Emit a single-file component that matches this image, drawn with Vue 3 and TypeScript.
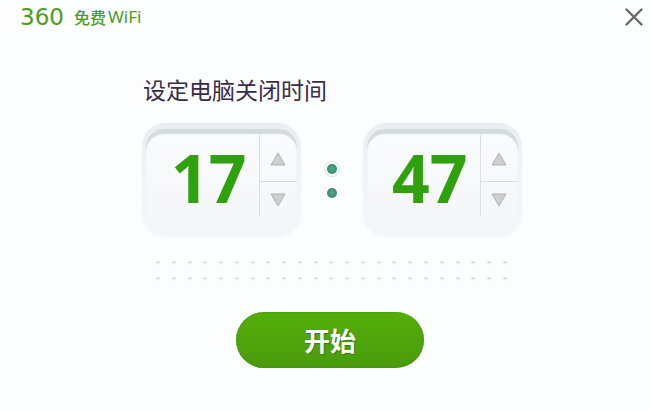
<script setup lang="ts">
import { ref } from 'vue'

interface Field {
  id: string
  label: string
  max: number
}

const fields: Field[] = [
  { id: 'hours', label: '时', max: 24 },
  { id: 'minutes', label: '分', max: 60 },
]

const values = ref<string[]>(['17', '47'])

function step(index: number, delta: number): void {
  const max = fields[index].max
  const current = Number(values.value[index]) || 0
  values.value[index] = String((current + delta + max) % max).padStart(2, '0')
}
</script>

<template>
  <div class="window">
    <header class="titlebar">
      <div class="logo">
        <span class="logo-number">360</span>
        <span class="logo-name">免费</span>
        <span class="logo-wifi">WiFi</span>
      </div>
      <button class="close" type="button" aria-label="关闭">
        <svg viewBox="0 0 18 18" width="18" height="18" aria-hidden="true">
          <path d="M1.5 1.5 16.5 16.5M16.5 1.5 1.5 16.5" />
        </svg>
      </button>
    </header>

    <main class="content">
      <section class="timer">
        <h1 class="heading">设定电脑关闭时间</h1>
        <div class="clock">
          <template v-for="(field, i) in fields" :key="field.id">
            <div v-if="i > 0" class="colon" aria-hidden="true">
              <span class="colon-dot lit"></span>
              <span class="colon-dot"></span>
            </div>
            <div class="card">
              <div class="face">
                <input
                  :id="field.id"
                  v-model="values[i]"
                  class="digits"
                  type="text"
                  inputmode="numeric"
                  maxlength="2"
                  :aria-label="field.label"
                />
                <div class="stepper">
                  <button class="step" type="button" :aria-label="field.label + '加'" @click="step(i, 1)">
                    <svg viewBox="0 0 16 14" width="16" height="14" aria-hidden="true">
                      <path d="M8 1 15 13H1Z" />
                    </svg>
                  </button>
                  <button class="step" type="button" :aria-label="field.label + '减'" @click="step(i, -1)">
                    <svg viewBox="0 0 16 14" width="16" height="14" aria-hidden="true">
                      <path d="M8 13 1 1H15Z" />
                    </svg>
                  </button>
                </div>
              </div>
            </div>
          </template>
        </div>
        <div class="grille" aria-hidden="true">
          <div v-for="row in 2" :key="row" class="grille-row">
            <span v-for="n in 23" :key="n" class="hole"></span>
          </div>
        </div>
      </section>
      <button class="start" type="button">开始</button>
    </main>
  </div>
</template>

<style>
body {
  background: #fbfdff;
}
</style>

<style scoped>
.window {
  box-sizing: border-box;
  min-height: 100vh;
  background: #fbfdff;
  font-family: "Noto Sans", "Noto Sans CJK SC", sans-serif;
}

button {
  padding: 0;
  border: 0;
  background: none;
  font-family: inherit;
  cursor: pointer;
}

.titlebar {
  display: flex;
  align-items: center;
  justify-content: space-between;
  height: 34px;
  padding: 0 7px 0 20px;
}

.logo {
  display: flex;
  align-items: center;
  line-height: 20px;
  color: #4f9c1c;
}

.logo-number {
  width: 54px;
  font-family: "DejaVu Sans", sans-serif;
  font-size: 23px;
}

.logo-name {
  width: 34px;
  font-family: "Noto Sans CJK SC", sans-serif;
  font-size: 16px;
  font-weight: 500;
}

.logo-wifi {
  font-family: "Noto Sans", sans-serif;
  font-size: 17px;
}

.close {
  display: flex;
}

.close path {
  fill: none;
  stroke: #6b666c;
  stroke-width: 2.4;
  stroke-linecap: round;
}

.content {
  display: flex;
  flex-direction: column;
  align-items: center;
  padding: 39px 0 43px 14px;
}

.timer {
  width: 380px;
}

.heading {
  margin: 0;
  padding-left: 1px;
  font-family: "Noto Sans CJK SC", sans-serif;
  font-size: 23px;
  font-weight: 400;
  line-height: 32px;
  color: #3a2c48;
}

.clock {
  display: flex;
  justify-content: space-between;
  margin-top: 18px;
}

.card {
  box-sizing: border-box;
  width: 159px;
  height: 114px;
  padding: 6px 4px 12px;
  border-radius: 24px;
  background: linear-gradient(#eaeef1, #f1f3f6 40%, #f5f6f9);
  box-shadow: 0 0 2px #eef1f4;
}

.face {
  display: flex;
  height: 96px;
  border-radius: 18px;
  background: linear-gradient(#fafbfd, #f5f6f9);
  box-shadow: inset 0 5px 1px #d3dbdf;
}

.digits {
  box-sizing: border-box;
  flex: 1;
  min-width: 0;
  margin: 8px 0;
  padding: 0 0 0 25px;
  border: 0;
  outline: 0;
  background: none;
  font-family: "Noto Sans", sans-serif;
  font-size: 66px;
  font-weight: 700;
  line-height: 80px;
  color: #2fa10d;
}

.stepper {
  display: flex;
  flex-direction: column;
  width: 37px;
  margin: 6px 0 8px;
  border-left: 1px solid #dcdfe3;
}

.step {
  display: flex;
  flex: 0 0 46px;
  align-items: center;
  justify-content: center;
  padding: 2px 2px 0 0;
}

.step + .step {
  flex-basis: 36px;
  padding-top: 0;
  border-top: 1px solid #d9dce0;
}

.step path {
  fill: #cfcfd1;
  stroke: #b2b2b5;
  stroke-width: 1;
}

.colon {
  display: flex;
  flex-direction: column;
  align-items: center;
  justify-content: center;
  gap: 14px;
  padding-top: 2px;
}

.colon-dot {
  width: 10px;
  height: 10px;
  border-radius: 50%;
  background: radial-gradient(#4fa985, #328166);
}

.colon-dot.lit {
  box-shadow: 0 0 0 2px #f7faf6, 0 0 0 3px #dce9dd;
}

.grille {
  display: flex;
  flex-direction: column;
  gap: 12px;
  margin-top: 24px;
  padding: 0 14px 0 13px;
}

.grille-row {
  display: flex;
  justify-content: space-between;
}

.hole {
  width: 4px;
  height: 4px;
  box-sizing: border-box;
  margin: 0 1px;
  border-radius: 50%;
  border-top: 2px solid #dadce0;
  background: #eff1f4;
}

.start {
  width: 188px;
  height: 56px;
  margin: 31px 4px 0 0;
  border-radius: 28px;
  background: linear-gradient(#55ae08, #4a9b0d);
  box-shadow: inset 0 0 2px #3f8a12;
  font-family: "Noto Sans CJK SC", sans-serif;
  font-size: 26px;
  font-weight: 700;
  line-height: 56px;
  color: #fff;
  text-shadow: 1px 1px 1px #39790f;
}
</style>
